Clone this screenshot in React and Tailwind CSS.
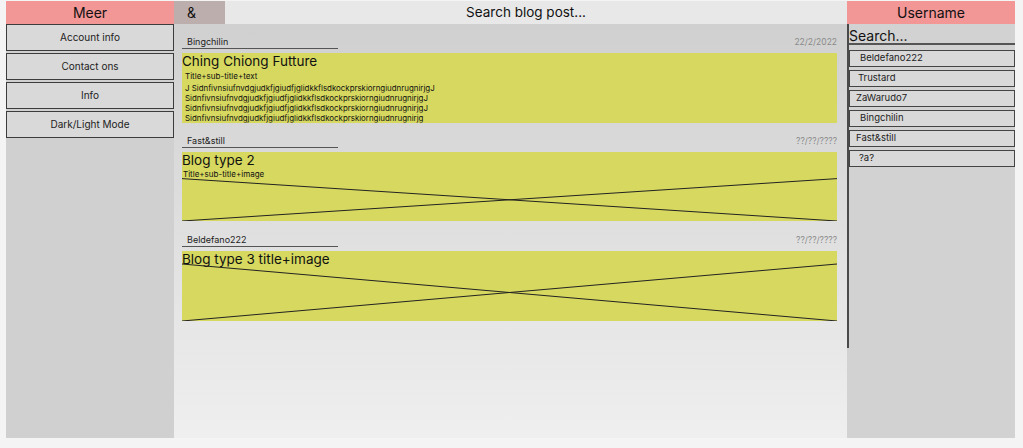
import React from 'react';

const menu = ['Account info', 'Contact ons', 'Info', 'Dark/Light Mode'];

const users = [
  { name: 'Beldefano222', pl: 'pl-[10px]' },
  { name: 'Trustard', pl: 'pl-[8px]' },
  { name: 'ZaWarudo7', pl: 'pl-[6px]' },
  { name: 'Bingchilin', pl: 'pl-[10px]' },
  { name: 'Fast&still', pl: 'pl-[6px]' },
  { name: '?a?', pl: 'pl-[9px]' },
];

const junk = 'Sidnfivnsiufnvdgjudkfjgiudfjglidkkflsdkockprskiorngiudnrugnirjg';

function PostHead({ author, date }) {
  return (
    <div className="flex items-end justify-between h-[18px]">
      <div className="w-[156px] border-b border-[#555] pl-[5px] text-[9px] leading-[12px] text-[#222]">{author}</div>
      <div className="text-[8.5px] leading-[12px] text-[#8a8a8a] pb-[1px]">{date}</div>
    </div>
  );
}

function Cross({ top }) {
  return (
    <svg className="absolute left-0 top-0 w-full h-full" viewBox="0 0 655 70" preserveAspectRatio="none">
      <line x1="0" y1={top} x2="655" y2="70" stroke="#222" strokeWidth="1" vectorEffect="non-scaling-stroke" />
      <line x1="0" y1="70" x2="655" y2={top} stroke="#222" strokeWidth="1" vectorEffect="non-scaling-stroke" />
    </svg>
  );
}

export default function App() {
  return (
    <div className="w-full h-[448px] bg-[#f4f4f4] pt-[1px] pl-[6px] pr-[8px] font-['Inter','Noto_Sans',sans-serif] text-[#111]">
      <div className="flex h-[437px]">
        {/* left menu */}
        <div className="w-[168px] flex flex-col">
          <div className="h-[23px] bg-[#f29696] flex items-center justify-center text-[14px]">Meer</div>
          <div className="flex-1 bg-[#d0d0d0] flex flex-col gap-[2px]">
            {menu.map((m) => (
              <div key={m} className="h-[27px] border-[1.5px] border-[#3c3c3c] bg-[#d9d9d9] flex items-center justify-center text-[10px] text-[#222]">
                {m}
              </div>
            ))}
          </div>
        </div>

        {/* center */}
        <div className="w-[673px] flex flex-col">
          <div className="h-[23px] flex">
            <div className="w-[51px] bg-[#bdaeae] flex items-center pl-[13px] text-[14px]">&amp;</div>
            <div className="flex-1 bg-[#e8e8e8] flex items-center justify-center pr-[20px] text-[13.5px]">Search blog post...</div>
          </div>
          <div className="flex-1 bg-gradient-to-b from-[#d0d0d0] to-[#efefef] pl-[8px] pr-[10px] pt-[7px] flex flex-col">
            <PostHead author="Bingchilin" date="22/2/2022" />
            <div className="mt-[4px] h-[70px] bg-[#d6d85f]">
              <div className="text-[13.5px] leading-[17px]">Ching Chiong Futture</div>
              <div className="pl-[3px] text-[8px] leading-[10px] mt-[1px]">Title+sub-title+text</div>
              <div className="pl-[3px] text-[7.9px] leading-[10px] mt-[2px]">
                <div>J {junk}J</div>
                <div>{junk}J</div>
                <div>{junk}J</div>
                <div>{junk}</div>
              </div>
            </div>

            <div className="mt-[7px]">
              <PostHead author="Fast&still" date="??/??/????" />
            </div>
            <div className="mt-[4px] h-[69px] bg-[#d6d85f] relative">
              <div className="text-[13.5px] leading-[17px]">Blog type 2</div>
              <div className="pl-[1px] text-[8px] leading-[10px]">Title+sub-title+image</div>
              <Cross top={27} />
            </div>

            <div className="mt-[8px]">
              <PostHead author="Beldefano222" date="??/??/????" />
            </div>
            <div className="mt-[4px] h-[70px] bg-[#d6d85f] relative">
              <div className="text-[13.5px] leading-[17px]">Blog type 3 title+image</div>
              <Cross top={13} />
            </div>
          </div>
        </div>

        {/* right users */}
        <div className="w-[168px] flex flex-col">
          <div className="h-[23px] bg-[#f29696] flex items-center justify-center text-[14px]">Username</div>
          <div className="flex-1 bg-[#d2d2d2] flex flex-col">
            <div className="h-[324px] border-l-2 border-[#4a4a4a] flex flex-col">
              <div className="h-[21px] border-b-2 border-[#555] text-[14px] leading-[20px] pt-[2px]">Search...</div>
              <div className="flex flex-col gap-[3px] mt-[5px]">
                {users.map((u) => (
                  <div key={u.name} className={`h-[17px] border-[1.5px] border-[#444] bg-[#d9d9d9] flex items-center text-[9.5px] text-[#222] ${u.pl}`}>
                    {u.name}
                  </div>
                ))}
              </div>
            </div>
          </div>
        </div>
      </div>
    </div>
  );
}
